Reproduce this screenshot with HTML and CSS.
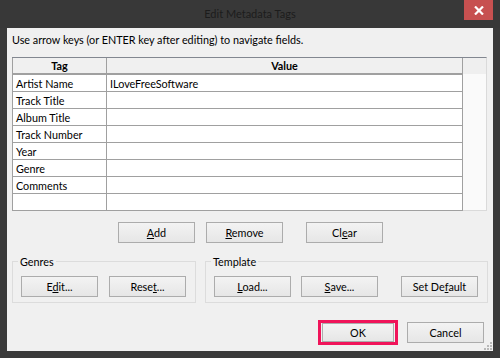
FILE: index.html
```html
<!DOCTYPE html>
<html lang="en">
<head>
    <meta charset="UTF-8">
    <title>Edit Metadata Tags</title>
    <link rel="stylesheet" href="styles.css">
</head>
<body>
    <div class="window">
        <div class="titlebar">
            <span class="title">Edit Metadata Tags</span>
            <button class="close">
                <svg width="10" height="9" viewBox="0 0 10 9"><path d="M1 0.5 L9 8.5 M9 0.5 L1 8.5" stroke="#fff" stroke-width="2.2"/></svg>
            </button>
        </div>
        <div class="client">
            <p class="hint">Use arrow keys (or ENTER key after editing) to navigate fields.</p>

            <div class="grid-box">
                <table class="tags">
                    <thead>
                        <tr><th class="col-tag">Tag</th><th>Value</th></tr>
                    </thead>
                    <tbody>
                        <tr><td>Artist Name</td><td>ILoveFreeSoftware</td></tr>
                        <tr><td>Track Title</td><td></td></tr>
                        <tr><td>Album Title</td><td></td></tr>
                        <tr><td>Track Number</td><td></td></tr>
                        <tr><td>Year</td><td></td></tr>
                        <tr><td>Genre</td><td></td></tr>
                        <tr><td>Comments</td><td></td></tr>
                        <tr><td></td><td></td></tr>
                    </tbody>
                </table>
                <div class="grid-side"><div class="side-head"></div></div>
            </div>

            <div class="row-buttons">
                <button class="btn"><u>A</u>dd</button>
                <button class="btn btn-remove"><u>R</u>emove</button>
                <button class="btn btn-clear">Cl<u>e</u>ar</button>
            </div>

            <div class="groups">
                <fieldset class="group genres">
                    <legend>Genres</legend>
                    <button class="btn">E<u>d</u>it...</button>
                    <button class="btn btn-reset">Rese<u>t</u>...</button>
                </fieldset>
                <fieldset class="group template">
                    <legend>Template</legend>
                    <button class="btn"><u>L</u>oad...</button>
                    <button class="btn btn-save"><u>S</u>ave...</button>
                    <button class="btn btn-default">Set De<u>f</u>ault</button>
                </fieldset>
            </div>

            <div class="footer">
                <div class="highlight"><button class="btn btn-ok">OK</button></div>
                <button class="btn btn-cancel">Cancel</button>
            </div>
            <div class="grip">
                <svg width="8" height="8" viewBox="0 0 8 8" fill="#b8b8b8">
                    <rect x="6" y="0" width="2" height="2"/>
                    <rect x="3" y="3" width="2" height="2"/><rect x="6" y="3" width="2" height="2"/>
                    <rect x="0" y="6" width="2" height="2"/><rect x="3" y="6" width="2" height="2"/><rect x="6" y="6" width="2" height="2"/>
                </svg>
            </div>
        </div>
    </div>
</body>
</html>
```

FILE: styles.css
```css
body {
    margin: 0;
    background-color: #3a3a3a;
    font-family: Lato, 'Liberation Sans', sans-serif;
    font-size: 10.8px;
    color: #000;
}
.window {
    width: 500px;
    height: 358px;
    display: flex;
    flex-direction: column;
}
.titlebar {
    height: 28px;
    display: flex;
    align-items: flex-start;
    background-color: #383838;
}
.title {
    flex: 1;
    text-align: center;
    padding-left: 36px;
    line-height: 28px;
    font-size: 11px;
    color: #1c1c1c;
}
.close {
    width: 29px;
    height: 20px;
    margin-right: 7px;
    border: 0;
    padding: 0;
    background-color: #c75050;
    display: flex;
    align-items: center;
    justify-content: center;
}
.client {
    margin: 0 7px;
    height: 323px;
    background-color: #f0f0f0;
    padding: 0 5px;
    box-sizing: border-box;
    position: relative;
}
.hint {
    margin: 0;
    padding-top: 5px;
    height: 29px;
    line-height: 14px;
    box-sizing: border-box;
}
.grid-box {
    display: flex;
    width: 475px;
    height: 154px;
    border-top: 1px solid #828790;
    border-right: 1px solid #dadada;
    border-bottom: 1px solid #dadada;
    background-color: #fafafa;
    box-sizing: border-box;
}
.tags {
    width: 451px;
    border-collapse: collapse;
    background-color: #fff;
    align-self: flex-start;
}
.tags th, .tags td {
    border: 1px solid #a0a0a0;
    height: 16px;
    padding: 0 3px;
    text-align: left;
    line-height: 15px;
}
.tags th {
    height: 15px;
    background-color: #f0f0f0;
    text-align: center;
    font-weight: bold;
    border-top: 0;
    border-bottom: 2px solid #a0a0a0;
}
.col-tag {
    width: 87px;
}
.grid-side {
    flex: 1;
}
.side-head {
    height: 16px;
    background-color: #efefef;
}
.btn {
    width: 77px;
    height: 21px;
    padding: 0;
    border: 1px solid #acacac;
    background: linear-gradient(#f3f3f3, #e6e6e6);
    font-family: Lato, 'Liberation Sans', sans-serif;
    font-size: 10.8px;
    color: #000;
}
.row-buttons {
    display: flex;
    margin-top: 11px;
    padding-left: 106px;
}
.btn-remove {
    margin-left: 11px;
}
.btn-clear {
    margin-left: 23px;
}
.groups {
    display: flex;
    margin-top: 12px;
}
.group {
    margin: 0;
    height: 48px;
    box-sizing: border-box;
    border: 1px solid #dcdcdc;
    padding: 8px 8px 0;
    display: flex;
    align-items: flex-start;
}
.group legend {
    padding: 0 2px;
    margin-left: -3px;
}
.genres {
    width: 184px;
}
.btn-reset {
    margin-left: 11px;
}
.template {
    width: 283px;
    margin-left: 9px;
}
.btn-save {
    margin-left: 10px;
}
.btn-default {
    margin-left: 23px;
}
.footer {
    display: flex;
    align-items: center;
    margin-top: 17px;
    padding-left: 306px;
}
.highlight {
    border: 3px solid #f0145a;
    padding: 0 1px;
    display: flex;
}
.btn-ok {
    width: 72px;
    height: 19px;
}
.btn-cancel {
    margin-left: 9px;
}
.grip {
    position: absolute;
    right: 1px;
    bottom: 1px;
    display: flex;
}
```
